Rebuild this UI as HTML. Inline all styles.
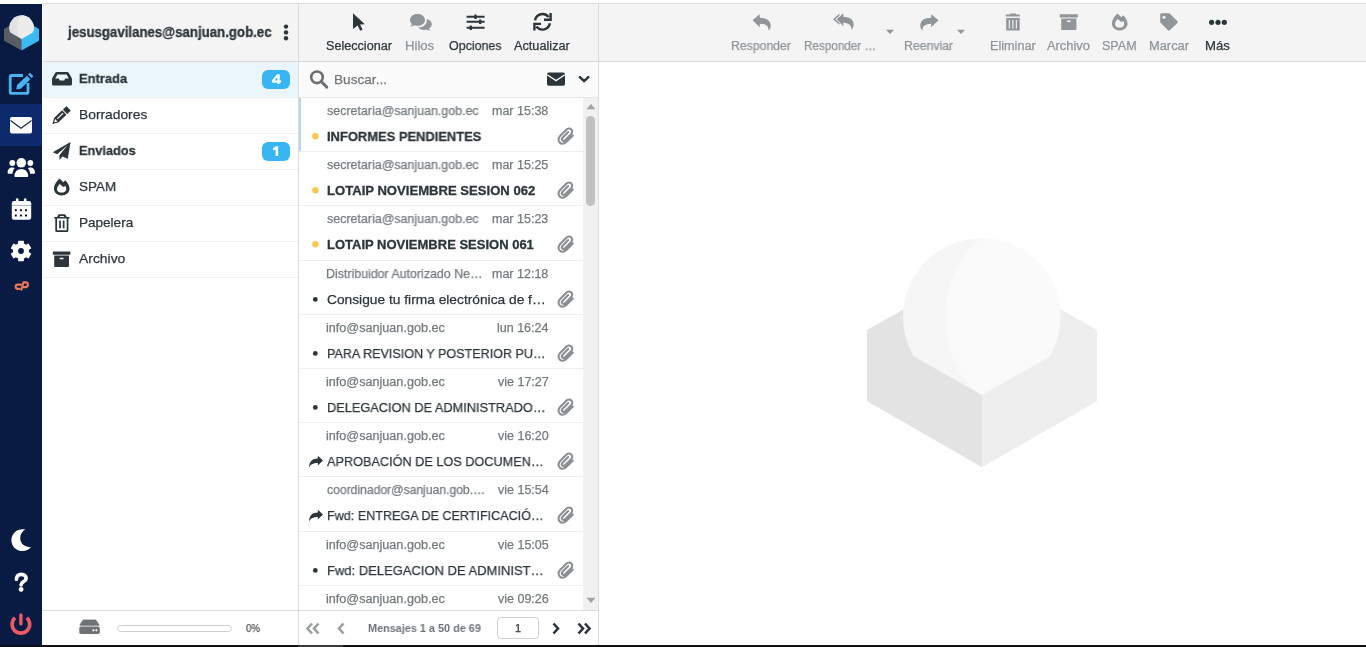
<!DOCTYPE html>
<html><head><meta charset="utf-8"><style>
*{box-sizing:border-box;margin:0;padding:0}
html,body{width:1366px;height:647px;overflow:hidden;background:#fff;font-family:"Liberation Sans",sans-serif;color:#2c363a}
.t{position:absolute;white-space:nowrap;will-change:transform}
.r{position:absolute}
svg{position:absolute;overflow:visible}
</style></head><body>
<div class="r" style="left:0px;top:0px;width:1366px;height:3px;background:#fff;"></div>
<div class="r" style="left:42px;top:3px;width:1324px;height:1px;background:#dedede;"></div>
<div class="r" style="left:0px;top:4px;width:42px;height:641px;background:#0a1b43;"></div>
<div class="r" style="left:0px;top:104px;width:42px;height:42px;background:#0d2b6c;"></div>
<div class="r" style="left:43px;top:4px;width:255px;height:57px;background:#f4f4f4;"></div>
<div class="r" style="left:299px;top:4px;width:299px;height:57px;background:#f4f4f4;"></div>
<div class="r" style="left:599px;top:4px;width:767px;height:57px;background:#f4f4f4;"></div>
<div class="r" style="left:43px;top:61px;width:1323px;height:1px;background:#d6d9db;"></div>
<div class="r" style="left:298px;top:4px;width:1px;height:641px;background:#dcdcdc;"></div>
<div class="r" style="left:598px;top:4px;width:1px;height:641px;background:#dcdcdc;"></div>
<div class="t" style="left:67.56px;transform-origin:0 0;transform:scaleX(0.9460);top:25.25px;font-size:14px;line-height:14px;color:#2c363a;font-weight:700;-webkit-text-stroke:0.3px #2c363a;">jesusgavilanes@sanjuan.gob.ec</div>
<svg style="left:283px;top:24px" width="6" height="17" viewBox="0 0 6 17"><circle cx="3" cy="2.6" r="2.2" fill="#2c363a"/><circle cx="3" cy="8.4" r="2.2" fill="#2c363a"/><circle cx="3" cy="14.2" r="2.2" fill="#2c363a"/></svg>
<div class="r" style="left:43px;top:62px;width:255px;height:35px;background:#eaf6fc;"></div>
<div class="r" style="left:43px;top:97px;width:255px;height:1px;background:#f0f0f0;"></div>
<div class="r" style="left:43px;top:133px;width:255px;height:1px;background:#f0f0f0;"></div>
<div class="r" style="left:43px;top:169px;width:255px;height:1px;background:#f0f0f0;"></div>
<div class="r" style="left:43px;top:205px;width:255px;height:1px;background:#f0f0f0;"></div>
<div class="r" style="left:43px;top:241px;width:255px;height:1px;background:#f0f0f0;"></div>
<div class="r" style="left:43px;top:277px;width:255px;height:1px;background:#f0f0f0;"></div>
<div class="t" style="left:78.79px;transform-origin:0 0;transform:scaleX(0.9576);top:72.07px;font-size:13.5px;line-height:13.5px;color:#2c363a;font-weight:700;-webkit-text-stroke:0.3px #2c363a;">Entrada</div>
<div class="t" style="left:78.79px;transform-origin:0 0;transform:scaleX(1.0226);top:108.07px;font-size:13.5px;line-height:13.5px;color:#2c363a;font-weight:400;-webkit-text-stroke:0.25px #2c363a;">Borradores</div>
<div class="t" style="left:78.79px;transform-origin:0 0;transform:scaleX(0.9448);top:144.07px;font-size:13.5px;line-height:13.5px;color:#2c363a;font-weight:700;-webkit-text-stroke:0.3px #2c363a;">Enviados</div>
<div class="t" style="left:78.79px;transform-origin:0 0;transform:scaleX(0.9949);top:180.07px;font-size:13.5px;line-height:13.5px;color:#2c363a;font-weight:400;-webkit-text-stroke:0.25px #2c363a;">SPAM</div>
<div class="t" style="left:78.79px;transform-origin:0 0;transform:scaleX(1.0025);top:216.07px;font-size:13.5px;line-height:13.5px;color:#2c363a;font-weight:400;-webkit-text-stroke:0.25px #2c363a;">Papelera</div>
<div class="t" style="left:78.79px;transform-origin:0 0;transform:scaleX(1.0288);top:252.07px;font-size:13.5px;line-height:13.5px;color:#2c363a;font-weight:400;-webkit-text-stroke:0.25px #2c363a;">Archivo</div>
<div class="r" style="left:262px;top:70px;width:28px;height:18.6px;background:#38b6f3;border-radius:6px"></div>
<svg style="left:0;top:0" width="1" height="1" viewBox="0 0 1 1"><path d="M277.1 74.2 H279.7 V80.4 H281.1 V82.4 H279.7 V84.1 H277.3 V82.4 H271.9 V80.6 Z M277.3 77.3 L274.5 80.4 H277.3 Z" fill="#fff" fill-rule="evenodd"/></svg>
<div class="r" style="left:262px;top:142px;width:28px;height:18.6px;background:#38b6f3;border-radius:6px"></div>
<svg style="left:0;top:0" width="1" height="1" viewBox="0 0 1 1"><path d="M275.6 146.2 H278.2 V156.1 H275.6 V149.6 L273 150.5 V148.3 Z" fill="#fff"/></svg>
<svg style="left:51px;top:71px" width="22" height="16" viewBox="0 0 22 16"><path d="M1 7.5 L4.5 1.5 Q5 1 5.8 1 H16.2 Q17 1 17.5 1.5 L21 7.5 V13 Q21 14.5 19.5 14.5 H2.5 Q1 14.5 1 13 Z" fill="#2c363a"/><path d="M4.2 7.5 L6.4 3.6 H15.6 L17.8 7.5 H14.2 L13.2 9.5 H8.8 L7.8 7.5 Z" fill="#eaf6fc"/></svg>
<svg style="left:52px;top:105px" width="20" height="20" viewBox="0 0 20 20"><g transform="translate(0.6 18.8) rotate(-44)"><path d="M0 0 L5 -3.1 H16.2 V3.1 H5 Z" fill="#2c363a"/><path d="M2.2 0 L5.2 -1.8 V1.8 Z" fill="#fff"/><path d="M0 0 L1.6 -1 V1 Z" fill="#2c363a"/><rect x="6.8" y="-0.9" width="8" height="1.1" fill="#fff"/><rect x="17.3" y="-3.1" width="5" height="6.2" rx="0.5" fill="#2c363a"/></g></svg>
<svg style="left:52px;top:141px" width="20" height="20" viewBox="0 0 20 20"><path d="M18.5 1 L0.8 11.3 L5.2 13.2 L15.5 4.2 L7.4 14.2 L7.4 19 L10.4 15.5 L15.8 17.8 Z" fill="#2c363a"/></svg>
<svg style="left:53.3px;top:178.2px" width="18" height="19" viewBox="0 0 18 19"><path d="M6.5 0.5 C3.5 3.5 0.9 6.8 0.9 10.6 C0.9 14.6 4.3 17.6 8.7 17.6 C13.1 17.6 16.5 14.6 16.5 10.6 C16.5 7.5 14.5 4.5 12.2 2.2 L10.4 4.2 Z M6.7 5.9 C5.3 7.3 4 9.2 4 11.2 C4 13.2 6 14.6 8.6 14.6 C11.2 14.6 13.3 13.2 13.3 11.2 C13.3 10 13 8.9 12.5 8.1 L10.2 9 Z" fill="#2c363a" fill-rule="evenodd"/></svg>
<svg style="left:53px;top:213px" width="18" height="20" viewBox="0 0 18 20"><path d="M6.2 1.3 H11.6 Q12.4 1.3 12.8 2 L13.6 3.9 H16.5 V5.6 H1.2 V3.9 H4.2 L5 2 Q5.4 1.3 6.2 1.3 Z M6.6 3.9 H11.2 L10.8 2.9 H7 Z" fill="#2c363a" fill-rule="evenodd"/><path d="M2.3 5 H4 V17 Q4 17.2 4.2 17.2 H13.5 Q13.7 17.2 13.7 17 V5 H15.4 V17.4 Q15.4 18.9 13.9 18.9 H3.8 Q2.3 18.9 2.3 17.4 Z" fill="#2c363a"/><rect x="6.2" y="7.5" width="1.7" height="7.8" fill="#2c363a"/><rect x="9.8" y="7.5" width="1.7" height="7.8" fill="#2c363a"/></svg>
<svg style="left:52px;top:250px" width="20" height="18" viewBox="0 0 20 18"><rect x="0.8" y="1.5" width="17.6" height="3.2" rx="0.6" fill="#2c363a"/><path d="M2.2 5.6 H17 V16 Q17 17 16 17 H3.2 Q2.2 17 2.2 16 Z" fill="#2c363a"/><rect x="7.6" y="7.8" width="4" height="1.4" rx="0.7" fill="#fff"/></svg>
<div class="t" style="left:325.75px;transform-origin:0 0;transform:scaleX(1.0089);top:39.82px;font-size:12.5px;line-height:12.5px;color:#2c363a;font-weight:400;-webkit-text-stroke:0.25px #2c363a;">Seleccionar</div>
<div class="t" style="left:405.45px;transform-origin:0 0;transform:scaleX(1.0486);top:39.82px;font-size:12.5px;line-height:12.5px;color:#8f9599;font-weight:400;-webkit-text-stroke:0.25px #8f9599;">Hilos</div>
<div class="t" style="left:448.95px;transform-origin:0 0;transform:scaleX(0.9940);top:39.82px;font-size:12.5px;line-height:12.5px;color:#2c363a;font-weight:400;-webkit-text-stroke:0.25px #2c363a;">Opciones</div>
<div class="t" style="left:514.05px;transform-origin:0 0;transform:scaleX(1.0169);top:39.82px;font-size:12.5px;line-height:12.5px;color:#2c363a;font-weight:400;-webkit-text-stroke:0.25px #2c363a;">Actualizar</div>
<svg style="left:352px;top:12px" width="14" height="20" viewBox="0 0 14 20"><path d="M1 1.2 L12.8 12.2 L8 12.4 L10.6 17.6 L8.3 18.8 L5.6 13.5 L1 17 Z" fill="#2c363a"/></svg>
<svg style="left:409px;top:13px" width="24" height="18" viewBox="0 0 24 18"><path d="M8.5 1 C4 1 1 3.7 1 7 C1 8.6 1.8 10 3 11 C2.7 12 2 12.9 1.2 13.5 C3 13.5 4.4 12.8 5.3 12.2 C6.3 12.6 7.4 12.8 8.5 12.8 C13 12.8 16 10.2 16 7 C16 3.7 13 1 8.5 1 Z" fill="#8f9599"/><path d="M17.5 6 C17.8 6.3 17.9 7 17.9 7.5 C17.9 11.6 13.9 14.5 9.3 14.6 C10.5 16 12.5 17 15 17 C16 17 16.9 16.8 17.8 16.5 C18.6 17 19.8 17.6 21.6 17.6 C20.9 17 20.3 16.2 20 15.4 C21.8 14.4 22.8 12.8 22.8 11 C22.8 8.8 20.8 6.7 17.5 6 Z" fill="#8f9599"/></svg>
<svg style="left:466px;top:13px" width="20" height="18" viewBox="0 0 20 18"><rect x="0.6" y="2.7" width="18" height="2" rx="0.3" fill="#2c363a"/><rect x="0.6" y="7.8" width="18" height="2" rx="0.3" fill="#2c363a"/><rect x="0.6" y="13.7" width="18" height="2" rx="0.3" fill="#2c363a"/><rect x="8.3" y="1.4" width="2.4" height="4.6" rx="0.6" fill="#2c363a"/><rect x="13" y="6.5" width="2.4" height="4.6" rx="0.6" fill="#2c363a"/><rect x="3.6" y="12.4" width="2.4" height="4.6" rx="0.6" fill="#2c363a"/></svg>
<svg style="left:532px;top:12px" width="21" height="20" viewBox="0 0 21 20"><path d="M3.1 8.4 A7.6 7.6 0 0 1 16.6 5.0 M18.6 1.1 V7.7 H12" fill="none" stroke="#2c363a" stroke-width="2.4"/><path d="M17.9 11.2 A7.6 7.6 0 0 1 4.4 14.6 M2.4 18.5 V11.9 H9" fill="none" stroke="#2c363a" stroke-width="2.4"/></svg>
<div class="r" style="left:299px;top:62px;width:299px;height:35px;background:#fbfbfb;"></div>
<div class="r" style="left:299px;top:97px;width:299px;height:1px;background:#e6e6e6;"></div>
<svg style="left:309px;top:69px" width="20" height="20" viewBox="0 0 20 20"><circle cx="8" cy="8.3" r="5.8" fill="none" stroke="#6a6f73" stroke-width="2.6"/><path d="M12.2 12.5 L17.8 18.1" stroke="#6a6f73" stroke-width="2.9" stroke-linecap="round"/></svg>
<div class="t" style="left:334.49px;transform-origin:0 0;transform:scaleX(1.0087);top:73.37px;font-size:13.5px;line-height:13.5px;color:#72777b;font-weight:400;-webkit-text-stroke:0.25px #72777b;">Buscar...</div>
<svg style="left:546px;top:71px" width="20" height="16" viewBox="0 0 20 16"><rect x="1" y="1.4" width="18" height="13.3" rx="1.8" fill="#2c363a"/><path d="M1.2 3.8 L10 9.6 L18.8 3.8" fill="none" stroke="#fbfbfb" stroke-width="1.3"/></svg>
<svg style="left:577px;top:74px" width="14" height="10" viewBox="0 0 14 10"><path d="M2.9 3.2 L7.1 7.2 L11.3 3.2" fill="none" stroke="#2c363a" stroke-width="2.5" stroke-linecap="round" stroke-linejoin="round"/></svg>
<div class="r" style="left:299px;top:151px;width:284px;height:1px;background:#eeeeee;"></div>
<div class="t" style="left:327.45px;transform-origin:0 0;transform:scaleX(0.9955);top:104.92px;font-size:12.5px;line-height:12.5px;color:#737a7e;font-weight:400;-webkit-text-stroke:0.25px #737a7e;">secretaria@sanjuan.gob.ec</div>
<div class="t" style="left:492.02px;transform-origin:100% 0;top:104.92px;font-size:12.5px;line-height:12.5px;color:#737a7e;font-weight:400;-webkit-text-stroke:0.25px #737a7e;">mar 15:38</div>
<div class="t" style="left:326.62px;transform-origin:0 0;transform:scaleX(0.9944);top:130.20px;font-size:13px;line-height:13px;color:#2c363a;font-weight:700;-webkit-text-stroke:0.3px #2c363a;">INFORMES PENDIENTES</div>
<svg style="left:310px;top:132px" width="11" height="9" viewBox="0 0 11 9"><circle cx="5.4" cy="4.2" r="3.2" fill="#f5c94c"/></svg>
<svg style="left:557.2px;top:126.6px" width="19" height="19" viewBox="0 0 19 19"><path d="M15.8 8.6 L9.3 15.1 C7.3 17.1 4.4 17.2 2.7 15.5 C1 13.8 1.1 11 3.1 9 L9.5 2.6 C10.9 1.2 13 1.1 14.3 2.4 C15.6 3.7 15.5 5.8 14.1 7.2 L8.1 13.2 C7.3 14 6.1 14.1 5.4 13.4 C4.7 12.7 4.8 11.5 5.6 10.7 L11.2 5.1" fill="none" stroke="#8b8f92" stroke-width="2.1" stroke-linecap="round"/></svg>
<div class="r" style="left:299px;top:205px;width:284px;height:1px;background:#eeeeee;"></div>
<div class="t" style="left:327.45px;transform-origin:0 0;transform:scaleX(0.9955);top:158.92px;font-size:12.5px;line-height:12.5px;color:#737a7e;font-weight:400;-webkit-text-stroke:0.25px #737a7e;">secretaria@sanjuan.gob.ec</div>
<div class="t" style="left:492.02px;transform-origin:100% 0;top:158.92px;font-size:12.5px;line-height:12.5px;color:#737a7e;font-weight:400;-webkit-text-stroke:0.25px #737a7e;">mar 15:25</div>
<div class="t" style="left:326.62px;transform-origin:0 0;transform:scaleX(1.0067);top:184.20px;font-size:13px;line-height:13px;color:#2c363a;font-weight:700;-webkit-text-stroke:0.3px #2c363a;">LOTAIP NOVIEMBRE SESION 062</div>
<svg style="left:310px;top:186px" width="11" height="9" viewBox="0 0 11 9"><circle cx="5.4" cy="4.2" r="3.2" fill="#f5c94c"/></svg>
<svg style="left:557.2px;top:180.6px" width="19" height="19" viewBox="0 0 19 19"><path d="M15.8 8.6 L9.3 15.1 C7.3 17.1 4.4 17.2 2.7 15.5 C1 13.8 1.1 11 3.1 9 L9.5 2.6 C10.9 1.2 13 1.1 14.3 2.4 C15.6 3.7 15.5 5.8 14.1 7.2 L8.1 13.2 C7.3 14 6.1 14.1 5.4 13.4 C4.7 12.7 4.8 11.5 5.6 10.7 L11.2 5.1" fill="none" stroke="#8b8f92" stroke-width="2.1" stroke-linecap="round"/></svg>
<div class="r" style="left:299px;top:260px;width:284px;height:1px;background:#eeeeee;"></div>
<div class="t" style="left:327.45px;transform-origin:0 0;transform:scaleX(0.9955);top:212.92px;font-size:12.5px;line-height:12.5px;color:#737a7e;font-weight:400;-webkit-text-stroke:0.25px #737a7e;">secretaria@sanjuan.gob.ec</div>
<div class="t" style="left:492.02px;transform-origin:100% 0;top:212.92px;font-size:12.5px;line-height:12.5px;color:#737a7e;font-weight:400;-webkit-text-stroke:0.25px #737a7e;">mar 15:23</div>
<div class="t" style="left:326.62px;transform-origin:0 0;top:238.20px;font-size:13px;line-height:13px;color:#2c363a;font-weight:700;-webkit-text-stroke:0.3px #2c363a;">LOTAIP NOVIEMBRE SESION 061</div>
<svg style="left:310px;top:240px" width="11" height="9" viewBox="0 0 11 9"><circle cx="5.4" cy="4.2" r="3.2" fill="#f5c94c"/></svg>
<svg style="left:557.2px;top:234.6px" width="19" height="19" viewBox="0 0 19 19"><path d="M15.8 8.6 L9.3 15.1 C7.3 17.1 4.4 17.2 2.7 15.5 C1 13.8 1.1 11 3.1 9 L9.5 2.6 C10.9 1.2 13 1.1 14.3 2.4 C15.6 3.7 15.5 5.8 14.1 7.2 L8.1 13.2 C7.3 14 6.1 14.1 5.4 13.4 C4.7 12.7 4.8 11.5 5.6 10.7 L11.2 5.1" fill="none" stroke="#8b8f92" stroke-width="2.1" stroke-linecap="round"/></svg>
<div class="r" style="left:299px;top:314px;width:284px;height:1px;background:#eeeeee;"></div>
<div class="t" style="left:326.45px;transform-origin:0 0;transform:scaleX(0.9916);top:267.92px;font-size:12.5px;line-height:12.5px;color:#737a7e;font-weight:400;-webkit-text-stroke:0.25px #737a7e;">Distribuidor Autorizado Ne…</div>
<div class="t" style="left:492.02px;transform-origin:100% 0;top:267.92px;font-size:12.5px;line-height:12.5px;color:#737a7e;font-weight:400;-webkit-text-stroke:0.25px #737a7e;">mar 12:18</div>
<div class="t" style="left:326.59px;transform-origin:0 0;transform:scaleX(1.0191);top:292.77px;font-size:13.5px;line-height:13.5px;color:#2c363a;font-weight:400;-webkit-text-stroke:0.25px #2c363a;">Consigue tu firma electrónica de f…</div>
<svg style="left:310px;top:295px" width="11" height="9" viewBox="0 0 11 9"><circle cx="5.3" cy="4.4" r="2.4" fill="#2c363a"/></svg>
<svg style="left:557.2px;top:289.6px" width="19" height="19" viewBox="0 0 19 19"><path d="M15.8 8.6 L9.3 15.1 C7.3 17.1 4.4 17.2 2.7 15.5 C1 13.8 1.1 11 3.1 9 L9.5 2.6 C10.9 1.2 13 1.1 14.3 2.4 C15.6 3.7 15.5 5.8 14.1 7.2 L8.1 13.2 C7.3 14 6.1 14.1 5.4 13.4 C4.7 12.7 4.8 11.5 5.6 10.7 L11.2 5.1" fill="none" stroke="#8b8f92" stroke-width="2.1" stroke-linecap="round"/></svg>
<div class="r" style="left:299px;top:368px;width:284px;height:1px;background:#eeeeee;"></div>
<div class="t" style="left:326.45px;transform-origin:0 0;transform:scaleX(1.0099);top:321.92px;font-size:12.5px;line-height:12.5px;color:#737a7e;font-weight:400;-webkit-text-stroke:0.25px #737a7e;">info@sanjuan.gob.ec</div>
<div class="t" style="left:496.86px;transform-origin:100% 0;top:321.92px;font-size:12.5px;line-height:12.5px;color:#737a7e;font-weight:400;-webkit-text-stroke:0.25px #737a7e;">lun 16:24</div>
<div class="t" style="left:326.59px;transform-origin:0 0;transform:scaleX(0.9309);top:346.77px;font-size:13.5px;line-height:13.5px;color:#2c363a;font-weight:400;-webkit-text-stroke:0.25px #2c363a;">PARA REVISION Y POSTERIOR PU…</div>
<svg style="left:310px;top:349px" width="11" height="9" viewBox="0 0 11 9"><circle cx="5.3" cy="4.4" r="2.4" fill="#2c363a"/></svg>
<svg style="left:557.2px;top:343.6px" width="19" height="19" viewBox="0 0 19 19"><path d="M15.8 8.6 L9.3 15.1 C7.3 17.1 4.4 17.2 2.7 15.5 C1 13.8 1.1 11 3.1 9 L9.5 2.6 C10.9 1.2 13 1.1 14.3 2.4 C15.6 3.7 15.5 5.8 14.1 7.2 L8.1 13.2 C7.3 14 6.1 14.1 5.4 13.4 C4.7 12.7 4.8 11.5 5.6 10.7 L11.2 5.1" fill="none" stroke="#8b8f92" stroke-width="2.1" stroke-linecap="round"/></svg>
<div class="r" style="left:299px;top:422px;width:284px;height:1px;background:#eeeeee;"></div>
<div class="t" style="left:326.45px;transform-origin:0 0;transform:scaleX(1.0099);top:375.92px;font-size:12.5px;line-height:12.5px;color:#737a7e;font-weight:400;-webkit-text-stroke:0.25px #737a7e;">info@sanjuan.gob.ec</div>
<div class="t" style="left:497.57px;transform-origin:100% 0;top:375.92px;font-size:12.5px;line-height:12.5px;color:#737a7e;font-weight:400;-webkit-text-stroke:0.25px #737a7e;">vie 17:27</div>
<div class="t" style="left:326.59px;transform-origin:0 0;transform:scaleX(0.9462);top:400.77px;font-size:13.5px;line-height:13.5px;color:#2c363a;font-weight:400;-webkit-text-stroke:0.25px #2c363a;">DELEGACION DE ADMINISTRADO…</div>
<svg style="left:310px;top:403px" width="11" height="9" viewBox="0 0 11 9"><circle cx="5.3" cy="4.4" r="2.4" fill="#2c363a"/></svg>
<svg style="left:557.2px;top:397.6px" width="19" height="19" viewBox="0 0 19 19"><path d="M15.8 8.6 L9.3 15.1 C7.3 17.1 4.4 17.2 2.7 15.5 C1 13.8 1.1 11 3.1 9 L9.5 2.6 C10.9 1.2 13 1.1 14.3 2.4 C15.6 3.7 15.5 5.8 14.1 7.2 L8.1 13.2 C7.3 14 6.1 14.1 5.4 13.4 C4.7 12.7 4.8 11.5 5.6 10.7 L11.2 5.1" fill="none" stroke="#8b8f92" stroke-width="2.1" stroke-linecap="round"/></svg>
<div class="r" style="left:299px;top:476px;width:284px;height:1px;background:#eeeeee;"></div>
<div class="t" style="left:326.45px;transform-origin:0 0;transform:scaleX(1.0099);top:429.92px;font-size:12.5px;line-height:12.5px;color:#737a7e;font-weight:400;-webkit-text-stroke:0.25px #737a7e;">info@sanjuan.gob.ec</div>
<div class="t" style="left:497.57px;transform-origin:100% 0;top:429.92px;font-size:12.5px;line-height:12.5px;color:#737a7e;font-weight:400;-webkit-text-stroke:0.25px #737a7e;">vie 16:20</div>
<div class="t" style="left:326.59px;transform-origin:0 0;transform:scaleX(0.9406);top:454.77px;font-size:13.5px;line-height:13.5px;color:#2c363a;font-weight:400;-webkit-text-stroke:0.25px #2c363a;">APROBACIÓN DE LOS DOCUMEN…</div>
<svg style="left:308px;top:455px" width="16" height="14" viewBox="0 0 16 14"><path d="M15 5.6 L9.8 0.8 V3.4 C5 3.5 1.2 5.5 1 12.8 C2.2 9.3 5 7.9 9.8 7.9 V10.5 Z" fill="#2c363a"/></svg>
<svg style="left:557.2px;top:451.6px" width="19" height="19" viewBox="0 0 19 19"><path d="M15.8 8.6 L9.3 15.1 C7.3 17.1 4.4 17.2 2.7 15.5 C1 13.8 1.1 11 3.1 9 L9.5 2.6 C10.9 1.2 13 1.1 14.3 2.4 C15.6 3.7 15.5 5.8 14.1 7.2 L8.1 13.2 C7.3 14 6.1 14.1 5.4 13.4 C4.7 12.7 4.8 11.5 5.6 10.7 L11.2 5.1" fill="none" stroke="#8b8f92" stroke-width="2.1" stroke-linecap="round"/></svg>
<div class="r" style="left:299px;top:531px;width:284px;height:1px;background:#eeeeee;"></div>
<div class="t" style="left:327.45px;transform-origin:0 0;transform:scaleX(0.9722);top:483.92px;font-size:12.5px;line-height:12.5px;color:#737a7e;font-weight:400;-webkit-text-stroke:0.25px #737a7e;">coordinador@sanjuan.gob.…</div>
<div class="t" style="left:497.57px;transform-origin:100% 0;top:483.92px;font-size:12.5px;line-height:12.5px;color:#737a7e;font-weight:400;-webkit-text-stroke:0.25px #737a7e;">vie 15:54</div>
<div class="t" style="left:326.59px;transform-origin:0 0;transform:scaleX(0.9325);top:508.77px;font-size:13.5px;line-height:13.5px;color:#2c363a;font-weight:400;-webkit-text-stroke:0.25px #2c363a;">Fwd: ENTREGA DE CERTIFICACIÓ…</div>
<svg style="left:308px;top:509px" width="16" height="14" viewBox="0 0 16 14"><path d="M15 5.6 L9.8 0.8 V3.4 C5 3.5 1.2 5.5 1 12.8 C2.2 9.3 5 7.9 9.8 7.9 V10.5 Z" fill="#2c363a"/></svg>
<svg style="left:557.2px;top:505.6px" width="19" height="19" viewBox="0 0 19 19"><path d="M15.8 8.6 L9.3 15.1 C7.3 17.1 4.4 17.2 2.7 15.5 C1 13.8 1.1 11 3.1 9 L9.5 2.6 C10.9 1.2 13 1.1 14.3 2.4 C15.6 3.7 15.5 5.8 14.1 7.2 L8.1 13.2 C7.3 14 6.1 14.1 5.4 13.4 C4.7 12.7 4.8 11.5 5.6 10.7 L11.2 5.1" fill="none" stroke="#8b8f92" stroke-width="2.1" stroke-linecap="round"/></svg>
<div class="r" style="left:299px;top:585px;width:284px;height:1px;background:#eeeeee;"></div>
<div class="t" style="left:326.45px;transform-origin:0 0;transform:scaleX(1.0099);top:538.92px;font-size:12.5px;line-height:12.5px;color:#737a7e;font-weight:400;-webkit-text-stroke:0.25px #737a7e;">info@sanjuan.gob.ec</div>
<div class="t" style="left:497.57px;transform-origin:100% 0;top:538.92px;font-size:12.5px;line-height:12.5px;color:#737a7e;font-weight:400;-webkit-text-stroke:0.25px #737a7e;">vie 15:05</div>
<div class="t" style="left:326.59px;transform-origin:0 0;transform:scaleX(0.9626);top:563.77px;font-size:13.5px;line-height:13.5px;color:#2c363a;font-weight:400;-webkit-text-stroke:0.25px #2c363a;">Fwd: DELEGACION DE ADMINIST…</div>
<svg style="left:310px;top:566px" width="11" height="9" viewBox="0 0 11 9"><circle cx="5.3" cy="4.4" r="2.4" fill="#2c363a"/></svg>
<svg style="left:557.2px;top:560.6px" width="19" height="19" viewBox="0 0 19 19"><path d="M15.8 8.6 L9.3 15.1 C7.3 17.1 4.4 17.2 2.7 15.5 C1 13.8 1.1 11 3.1 9 L9.5 2.6 C10.9 1.2 13 1.1 14.3 2.4 C15.6 3.7 15.5 5.8 14.1 7.2 L8.1 13.2 C7.3 14 6.1 14.1 5.4 13.4 C4.7 12.7 4.8 11.5 5.6 10.7 L11.2 5.1" fill="none" stroke="#8b8f92" stroke-width="2.1" stroke-linecap="round"/></svg>
<div class="t" style="left:326.45px;transform-origin:0 0;transform:scaleX(1.0099);top:592.92px;font-size:12.5px;line-height:12.5px;color:#737a7e;font-weight:400;-webkit-text-stroke:0.25px #737a7e;">info@sanjuan.gob.ec</div>
<div class="t" style="left:497.57px;transform-origin:100% 0;top:592.92px;font-size:12.5px;line-height:12.5px;color:#737a7e;font-weight:400;-webkit-text-stroke:0.25px #737a7e;">vie 09:26</div>
<div class="r" style="left:299px;top:98px;width:2px;height:53px;background:#b3d8ec;"></div>
<div class="r" style="left:583px;top:98px;width:15px;height:512px;background:#f1f1f1;"></div>
<svg style="left:586px;top:103px" width="10" height="7" viewBox="0 0 10 7"><path d="M0.5 6.2 L5 1 L9.5 6.2 Z" fill="#a3a3a3"/></svg>
<div class="r" style="left:586px;top:116px;width:9px;height:90px;background:#c1c1c1;border-radius:4.5px"></div>
<svg style="left:586px;top:597px" width="10" height="7" viewBox="0 0 10 7"><path d="M0.5 0.8 L5 6 L9.5 0.8 Z" fill="#a3a3a3"/></svg>
<div class="r" style="left:43px;top:610px;width:555px;height:1px;background:#dcdcdc;"></div>
<svg style="left:79px;top:619px" width="22" height="16" viewBox="0 0 22 16"><path d="M4.2 1 H16.8 L20.2 6.3 H0.8 Z" fill="#6e7275" stroke="#6e7275" stroke-width="0.8" stroke-linejoin="round"/><rect x="0.3" y="7.5" width="20.5" height="7.6" rx="1.8" fill="#6e7275"/><circle cx="14.4" cy="11.3" r="1.1" fill="#fff"/><circle cx="17.4" cy="11.3" r="1.1" fill="#fff"/></svg>
<div class="r" style="left:117px;top:625px;width:115px;height:7px;background:#fff;border:1px solid #cfcfcf;border-radius:4px"></div>
<div class="t" style="left:246.27px;transform-origin:0 0;transform:scaleX(0.9270);top:623.41px;font-size:10.5px;line-height:10.5px;color:#55595c;font-weight:400;-webkit-text-stroke:0.25px #55595c;">0%</div>
<svg style="left:305px;top:622px" width="16" height="13" viewBox="0 0 16 13"><path d="M7 1.5 L2.5 6.5 L7 11.5 M13.5 1.5 L9 6.5 L13.5 11.5" fill="none" stroke="#9b9ea0" stroke-width="2.6" stroke-linejoin="miter"/></svg>
<svg style="left:336px;top:622px" width="10" height="13" viewBox="0 0 10 13"><path d="M7.5 1.5 L3 6.5 L7.5 11.5" fill="none" stroke="#9b9ea0" stroke-width="2.6"/></svg>
<div class="t" style="left:367.64px;transform-origin:0 0;transform:scaleX(0.9870);top:623.09px;font-size:11px;line-height:11px;color:#6f7478;font-weight:700;-webkit-text-stroke:0px #6f7478;">Mensajes 1 a 50 de 69</div>
<div class="r" style="left:497px;top:617px;width:42px;height:22px;background:#fff;border:1px solid #d0d0d0;border-radius:4px"></div>
<div class="t" style="left:514.94px;transform-origin:50% 0;top:623.49px;font-size:11px;line-height:11px;color:#2c363a;font-weight:400;-webkit-text-stroke:0.25px #2c363a;">1</div>
<svg style="left:551px;top:622px" width="10" height="13" viewBox="0 0 10 13"><path d="M2.5 1.5 L7 6.5 L2.5 11.5" fill="none" stroke="#2c363a" stroke-width="2.6"/></svg>
<svg style="left:576px;top:622px" width="16" height="13" viewBox="0 0 16 13"><path d="M2.5 1.5 L7 6.5 L2.5 11.5 M9 1.5 L13.5 6.5 L9 11.5" fill="none" stroke="#2c363a" stroke-width="2.6"/></svg>
<div class="r" style="left:0px;top:645px;width:1366px;height:2px;background:#111;"></div>
<div class="r" style="left:298px;top:645px;width:45px;height:2px;background:#3a3a3a;"></div>
<div class="t" style="left:731.05px;transform-origin:0 0;transform:scaleX(0.9791);top:39.52px;font-size:12.5px;line-height:12.5px;color:#8f9599;font-weight:400;-webkit-text-stroke:0.25px #8f9599;">Responder</div>
<div class="t" style="left:803.85px;transform-origin:0 0;transform:scaleX(0.9353);top:39.52px;font-size:12.5px;line-height:12.5px;color:#8f9599;font-weight:400;-webkit-text-stroke:0.25px #8f9599;">Responder …</div>
<div class="t" style="left:903.95px;transform-origin:0 0;transform:scaleX(0.9810);top:39.52px;font-size:12.5px;line-height:12.5px;color:#8f9599;font-weight:400;-webkit-text-stroke:0.25px #8f9599;">Reenviar</div>
<div class="t" style="left:989.75px;transform-origin:0 0;transform:scaleX(1.0123);top:39.52px;font-size:12.5px;line-height:12.5px;color:#8f9599;font-weight:400;-webkit-text-stroke:0.25px #8f9599;">Eliminar</div>
<div class="t" style="left:1047.35px;transform-origin:0 0;transform:scaleX(1.0298);top:39.52px;font-size:12.5px;line-height:12.5px;color:#8f9599;font-weight:400;-webkit-text-stroke:0.25px #8f9599;">Archivo</div>
<div class="t" style="left:1102.05px;transform-origin:0 0;transform:scaleX(1.0030);top:39.52px;font-size:12.5px;line-height:12.5px;color:#8f9599;font-weight:400;-webkit-text-stroke:0.25px #8f9599;">SPAM</div>
<div class="t" style="left:1148.65px;transform-origin:0 0;transform:scaleX(1.0289);top:39.52px;font-size:12.5px;line-height:12.5px;color:#8f9599;font-weight:400;-webkit-text-stroke:0.25px #8f9599;">Marcar</div>
<div class="t" style="left:1204.75px;transform-origin:0 0;transform:scaleX(1.0519);top:39.52px;font-size:12.5px;line-height:12.5px;color:#2c363a;font-weight:400;-webkit-text-stroke:0.25px #2c363a;">Más</div>
<svg style="left:751px;top:13px" width="22" height="19" viewBox="0 0 22 19"><path d="M1.5 7.3 L8.8 1.3 V4.8 C14.8 4.9 19.7 6.9 19.7 12.6 C19.7 15 18.6 16.8 17.4 17.8 C17.9 14.2 16.2 10.9 8.8 10.7 V14.3 Z" fill="#8f9599"/></svg>
<svg style="left:832px;top:12px" width="24" height="19" viewBox="0 0 24 19"><path d="M1 7.3 L7.5 1.8 V3.6 L3.4 7.3 L7.5 11 V12.8 Z" fill="#8f9599"/><path d="M4.8 7.3 L11.3 1.3 V4.8 C16.8 4.9 21.6 6.9 21.6 12.6 C21.6 15 20.6 16.8 19.4 17.8 C19.8 14.2 18 10.9 11.3 10.7 V14.3 Z" fill="#8f9599"/></svg>
<svg style="left:885px;top:29px" width="10" height="6" viewBox="0 0 10 6"><path d="M1 0.8 H9 L5 5 Z" fill="#8f9599"/></svg>
<svg style="left:918px;top:13px" width="22" height="19" viewBox="0 0 22 19"><path d="M20.5 7.3 L13.2 1.3 V4.8 C7.2 4.9 2.3 6.9 2.3 12.6 C2.3 15 3.4 16.8 4.6 17.8 C4.1 14.2 5.8 10.9 13.2 10.7 V14.3 Z" fill="#8f9599"/></svg>
<svg style="left:956px;top:29px" width="10" height="6" viewBox="0 0 10 6"><path d="M1 0.8 H9 L5 5 Z" fill="#8f9599"/></svg>
<svg style="left:1004px;top:12px" width="18" height="20" viewBox="0 0 18 20"><path d="M6.3 1.6 H11.7 L12.2 2.4 H15.8 V4.4 H1.8 V2.4 H5.8 Z" fill="#8f9599"/><rect x="2.2" y="6" width="13.5" height="12.6" rx="0.6" fill="#8f9599"/><rect x="4.8" y="8" width="1.1" height="8.6" fill="#f4f4f4"/><rect x="8.3" y="8" width="1.1" height="8.6" fill="#f4f4f4"/><rect x="11.8" y="8" width="1.1" height="8.6" fill="#f4f4f4"/></svg>
<svg style="left:1059px;top:13px" width="20" height="18" viewBox="0 0 20 18"><rect x="0.8" y="1.2" width="18" height="3.2" rx="0.5" fill="#8f9599"/><path d="M2.2 5.4 H17.4 V16 Q17.4 17 16.4 17 H3.2 Q2.2 17 2.2 16 Z" fill="#8f9599"/><rect x="7.8" y="7.5" width="4" height="1.4" rx="0.7" fill="#f4f4f4"/></svg>
<svg style="left:1111px;top:13px" width="18" height="19" viewBox="0 0 18 19"><path d="M6.5 0.5 C3.5 3.5 0.9 6.8 0.9 10.6 C0.9 14.6 4.3 17.6 8.7 17.6 C13.1 17.6 16.5 14.6 16.5 10.6 C16.5 7.5 14.5 4.5 12.2 2.2 L10.4 4.2 Z M6.7 5.9 C5.3 7.3 4 9.2 4 11.2 C4 13.2 6 14.6 8.6 14.6 C11.2 14.6 13.3 13.2 13.3 11.2 C13.3 10 13 8.9 12.5 8.1 L10.2 9 Z" fill="#8f9599" fill-rule="evenodd"/></svg>
<svg style="left:1159px;top:14px" width="20" height="18" viewBox="0 0 20 18"><path d="M1.2 0.6 Q1.2 -0.8 2.6 -0.8 H9.6 Q10.3 -0.8 10.9 -0.2 L18.4 7.3 Q19.1 8.1 18.4 8.9 L10.7 16.3 Q9.9 17 9.1 16.3 L1.8 9.1 Q1.2 8.5 1.2 7.7 Z" fill="#8f9599"/><circle cx="5" cy="3.3" r="1.5" fill="#f4f4f4"/></svg>
<svg style="left:1208px;top:19px" width="20" height="7" viewBox="0 0 20 7"><circle cx="3.6" cy="3.3" r="2.6" fill="#2c363a"/><circle cx="10" cy="3.3" r="2.6" fill="#2c363a"/><circle cx="16.3" cy="3.3" r="2.6" fill="#2c363a"/></svg>
<svg style="left:0px;top:0px" width="1366" height="647" viewBox="0 0 1366 647"><polygon points="867,330 982,265 982,467 867,401" fill="#e3e3e3"/><polygon points="982,265 1097,330 1097,401 982,467" fill="#eeeeee"/><circle cx="981.7" cy="317" r="78.7" fill="#f6f6f6"/><path d="M981.7 238.3 A78.7 78.7 0 0 1 981.7 395.7 C960 380 945 352 945 317 C945 282 960 254 981.7 238.3 Z" fill="#fafafa"/><polygon points="867,330 982,395 982,467 867,401" fill="#e3e3e3"/><polygon points="982,395 1097,330 1097,401 982,467" fill="#eeeeee"/></svg>
<svg style="left:0px;top:4px" width="42" height="50" viewBox="0 4 42 50"><polygon points="4,29 21.6,19 21.6,50.3 4,40.4" fill="#565e63"/><polygon points="21.6,19 39,29 39,40.4 21.6,50.3" fill="#3bb9f2"/><circle cx="21.5" cy="27.6" r="12.3" fill="#e2e2e2"/><path d="M21.5 15.3 A12.3 12.3 0 0 1 21.5 39.9 C18.5 37 17.2 32.5 17.2 27.6 C17.2 22.7 18.5 18.2 21.5 15.3 Z" fill="#ececec"/><polygon points="4,29 21.6,39 21.6,50.3 4,40.4" fill="#565e63"/><polygon points="21.6,39 39,29 39,40.4 21.6,50.3" fill="#3bb9f2"/></svg>
<svg style="left:8px;top:71px" width="27" height="25" viewBox="0 0 27 25"><path d="M15 4.5 H3.6 Q2.2 4.5 2.2 5.9 V20.9 Q2.2 22.3 3.6 22.3 H18.6 Q20 22.3 20 20.9 V12" fill="none" stroke="#48b3f0" stroke-width="2.8"/><path d="M22 1.8 L25.4 5.2 L23.6 7 L20.2 3.6 Z" fill="#48b3f0"/><path d="M19 4.8 L22.4 8.2 L12.8 17.8 L8.4 18.4 L9 14 Z" fill="#48b3f0"/></svg>
<svg style="left:9px;top:116px" width="24" height="19" viewBox="0 0 24 19"><rect x="1" y="1" width="22" height="16.4" rx="2" fill="#ffffff"/><path d="M1.5 4.6 L12 12.2 L22.5 4.6" fill="none" stroke="#1c2540" stroke-width="1.2"/></svg>
<svg style="left:7px;top:157px" width="29" height="21" viewBox="0 0 29 21"><circle cx="14.3" cy="5.8" r="4.8" fill="#fff"/><circle cx="5.3" cy="6" r="2.9" fill="#fff"/><circle cx="23.3" cy="6" r="2.9" fill="#fff"/><path d="M8.3 20 Q7.4 20 7.4 19 C7.4 14.8 10.4 12 14.3 12 C18.2 12 21.2 14.8 21.2 19 Q21.2 20 20.3 20 Z" fill="#fff"/><path d="M0.6 15.8 C0.6 12.4 2.5 10.4 5.3 10.4 C6.5 10.4 7.2 10.7 7.8 11.1 C6.4 12.6 5.6 14.3 5.5 16.8 H1.6 Q0.6 16.8 0.6 15.8 Z" fill="#fff"/><path d="M28 15.8 C28 12.4 26.1 10.4 23.3 10.4 C22.1 10.4 21.4 10.7 20.8 11.1 C22.2 12.6 23 14.3 23.1 16.8 H27 Q28 16.8 28 15.8 Z" fill="#fff"/></svg>
<svg style="left:11px;top:197px" width="22" height="24" viewBox="0 0 22 24"><rect x="0.8" y="4" width="19.4" height="18.8" rx="2.2" fill="#fff"/><rect x="4.9" y="1.2" width="2.6" height="5" rx="1.3" fill="#fff"/><rect x="12.9" y="1.2" width="2.6" height="5" rx="1.3" fill="#fff"/><rect x="0.8" y="8.1" width="19.4" height="0.7" fill="#8e97ad"/><rect x="3.85" y="12.25" width="1.9" height="1.9" fill="#000"/><rect x="3.85" y="17.55" width="1.9" height="1.9" fill="#000"/><rect x="8.95" y="12.25" width="1.9" height="1.9" fill="#000"/><rect x="8.95" y="17.55" width="1.9" height="1.9" fill="#000"/><rect x="14.05" y="12.25" width="1.9" height="1.9" fill="#000"/><rect x="14.05" y="17.55" width="1.9" height="1.9" fill="#000"/></svg>
<svg style="left:10px;top:240px" width="22" height="22" viewBox="-11 -11 22 22"><circle cx="0" cy="0" r="8.1" fill="#fff"/><rect x="-2.9" y="-10.3" width="5.8" height="4.5" rx="0.7" fill="#fff" transform="rotate(0)"/><rect x="-2.9" y="-10.3" width="5.8" height="4.5" rx="0.7" fill="#fff" transform="rotate(60)"/><rect x="-2.9" y="-10.3" width="5.8" height="4.5" rx="0.7" fill="#fff" transform="rotate(120)"/><rect x="-2.9" y="-10.3" width="5.8" height="4.5" rx="0.7" fill="#fff" transform="rotate(180)"/><rect x="-2.9" y="-10.3" width="5.8" height="4.5" rx="0.7" fill="#fff" transform="rotate(240)"/><rect x="-2.9" y="-10.3" width="5.8" height="4.5" rx="0.7" fill="#fff" transform="rotate(300)"/><circle cx="0" cy="0" r="2.9" fill="#0a1b43"/></svg>
<svg style="left:12px;top:279px" width="20" height="14" viewBox="0 0 20 14"><path d="M8.9 5.6 H5.6 Q3.7 5.6 3.7 7.8 Q3.7 9.9 5.6 9.9 H7.6" fill="none" stroke="#ee7a56" stroke-width="2.1" stroke-linecap="round"/><path d="M9.4 10.8 L11.4 3.4 H13.8 Q15.9 3.4 15.9 5.7 Q15.9 8.1 13.6 8.1 H11.2" fill="none" stroke="#ee7a56" stroke-width="2.1" stroke-linecap="round" stroke-linejoin="round"/></svg>
<svg style="left:10px;top:528px" width="23" height="24" viewBox="0 0 23 24"><path d="M12.5 1.2 C6.4 1.2 1.4 6.1 1.4 12.2 C1.4 18.3 6.4 23.1 12.5 23.1 C15.9 23.1 19 21.6 21 19.1 C14.8 19.6 10.2 15.6 10.2 10.1 C10.2 6.3 12.4 3.3 15.2 1.6 C14.3 1.3 13.4 1.2 12.5 1.2 Z" fill="#fff"/></svg>
<svg style="left:13px;top:571px" width="18" height="23" viewBox="0 0 18 23"><path d="M3.4 8.2 C3.4 5 5.5 3.4 8.3 3.4 C11.2 3.4 13.1 5 13.1 7.4 C13.1 10.4 8.1 10.6 8.1 13.8" fill="none" stroke="#fff" stroke-width="3.7" stroke-linecap="round"/><circle cx="8.1" cy="18.4" r="2.4" fill="#fff"/></svg>
<svg style="left:9px;top:613px" width="24" height="24" viewBox="0 0 24 24"><path d="M6.0 4.76 A8.8 8.8 0 1 0 17.8 4.76" fill="none" stroke="#ee5a64" stroke-width="3.6"/><rect x="10.2" y="0.2" width="3.4" height="12.4" rx="1.7" fill="#ee5a64"/></svg>
</body></html>
